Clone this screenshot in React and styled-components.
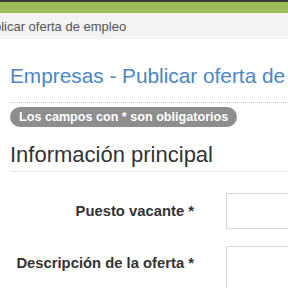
import React from "react";
import styled, { createGlobalStyle } from "styled-components";

const Global = createGlobalStyle`
  html, body { margin: 0; padding: 0; overflow: hidden; background: #fff; }
  body { font-family: "Liberation Sans", Arial, sans-serif; color: #333; }
`;

const Page = styled.div`
  width: 900px;
`;

const TopBar = styled.div`
  height: 11px;
  border-top: 2px solid #3a3a3a;
  background: #9bbb59;
`;

const Crumbs = styled.div`
  height: 26px;
  background: #f3f3f3;
  overflow: hidden;
  font-size: 13px;
  line-height: 27px;
  color: #555;
`;

const CrumbText = styled.span`
  display: inline-block;
  margin-left: -22px;
`;

const Content = styled.div`
  padding: 0 0 0 11px;
`;

const Title = styled.h1`
  margin: 24px 0 0 -1px;
  font-size: 20.8px;
  font-weight: normal;
  line-height: 26px;
  color: #4a86c6;
`;

const Dotted = styled.div`
  margin-top: 13px;
  border-top: 1px dotted #c8c8c8;
`;

const BadgeRow = styled.div`
  display: flex;
  margin-top: 4px;
`;

const Badge = styled.span`
  margin-left: -1px;
  padding: 0 9px;
  height: 20px;
  line-height: 20px;
  border-radius: 10px;
  background: #8e8e8e;
  color: #fff;
  font-weight: bold;
  font-size: 12.6px;
`;

const SectionTitle = styled.h2`
  margin: 15px 0 0 -1px;
  font-size: 22px;
  font-weight: normal;
  line-height: 26px;
  color: #333;
`;

const SectionRule = styled.div`
  margin-top: 3px;
  border-top: 1px solid #e5e5e5;
`;

const Form = styled.div`
  display: flex;
  flex-direction: column;
  gap: 17px;
  margin-top: 21px;
`;

const Row = styled.div`
  display: grid;
  grid-template-columns: 183px 400px;
  column-gap: 32px;
  align-items: start;
`;

const Label = styled.label`
  text-align: right;
  font-weight: bold;
  font-size: 14.8px;
  line-height: 17px;
  color: #333;
  padding-top: ${p => p.$pt}px;
`;

const Input = styled.div`
  height: ${p => p.$h}px;
  border: 1px solid #d6d6d6;
  background: #fff;
`;

export default function App() {
  return (
    <Page>
      <Global />
      <TopBar />
      <Crumbs>
        <CrumbText>Publicar oferta de empleo</CrumbText>
      </Crumbs>
      <Content>
        <Title>Empresas - Publicar oferta de empleo</Title>
        <Dotted />
        <BadgeRow>
          <Badge>Los campos con * son obligatorios</Badge>
        </BadgeRow>
        <SectionTitle>Información principal</SectionTitle>
        <SectionRule />
        <Form>
          <Row>
            <Label $pt={10}>Puesto vacante *</Label>
            <Input $h={34} />
          </Row>
          <Row>
            <Label $pt={9}>Descripción de la oferta *</Label>
            <Input $h={120} />
          </Row>
        </Form>
      </Content>
    </Page>
  );
}
